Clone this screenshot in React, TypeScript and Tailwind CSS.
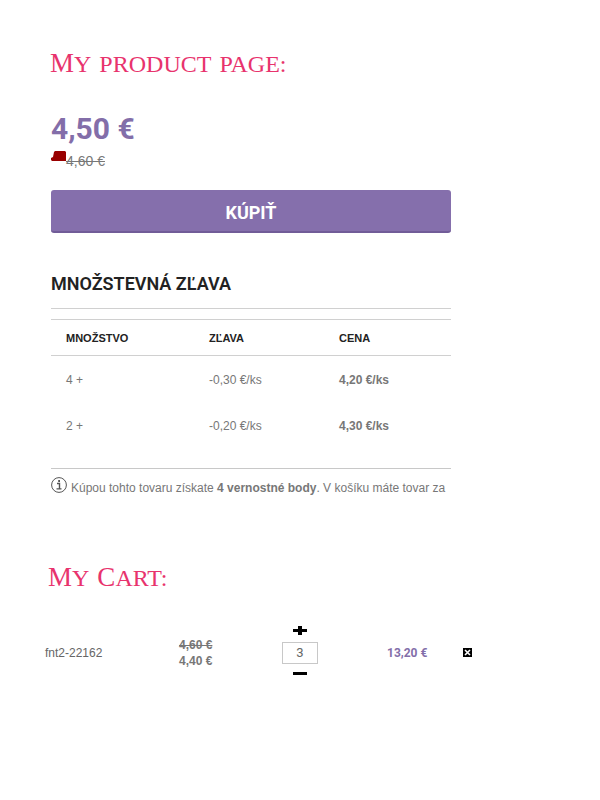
import React, { useState } from "react";

const discounts = [
	{ amount: "4 +", discount: "-0,30 €/ks", price: "4,20 €/ks" },
	{ amount: "2 +", discount: "-0,20 €/ks", price: "4,30 €/ks" },
];

const SectionTitle: React.FC<{ words: string[] }> = ({ words }) => (
	<h1 className="flex items-baseline gap-2 whitespace-nowrap font-['Liberation_Serif',serif] text-2xl leading-8 text-[#e8336d]">
		{words.map((word) => (
			<span
				key={word}
				className={
					/^[A-Z]/.test(word)
						? "inline-block uppercase first-letter:text-[27px]"
						: "inline-block uppercase"
				}
			>
				{word}
			</span>
		))}
	</h1>
);

const InfoIcon = () => (
	<svg
		className="h-4 w-4 shrink-0"
		viewBox="0 0 16 16"
		fill="none"
		stroke="#555"
		aria-hidden="true"
	>
		<circle cx="8" cy="8" r="7.4" />
		<path d="M6 6.5h2.5v5M5.5 11.9h5" strokeWidth="1.4" />
		<path d="M7.2 4h1.8" strokeWidth="1.8" />
	</svg>
);

const ProductSection = () => (
	<section>
		<p className="font-['Roboto',sans-serif] text-[30px] font-bold leading-9 text-[#836ea9]">
			4,50 €
		</p>
		<div className="mt-1 flex items-start">
			<svg
				className="h-[11px] w-[15px]"
				viewBox="0 0 15 11"
				fill="#990000"
				aria-hidden="true"
			>
				<path d="M4 0h10l1 1v9H1L0 9V7l2-1 1-5z" />
			</svg>
			<del className="text-sm text-[#777]">4,60 €</del>
		</div>
		<button
			type="button"
			className="mt-[19px] h-[43px] w-full rounded-[3px] border-b-2 border-[#715c98] bg-[#856fac] pt-1 font-['Roboto',sans-serif] text-lg font-bold text-white"
		>
			KÚPIŤ
		</button>

		<h2 className="mt-[37px] border-b border-[#d0d0d0] pb-2.5 font-['Roboto',sans-serif] text-lg font-semibold leading-7 text-[#222]">
			MNOŽSTEVNÁ ZĽAVA
		</h2>
		<table className="mt-2.5 w-full table-fixed text-left text-xs text-[#777]">
			<thead>
				<tr className="h-9 border-y border-[#d0d0d0] text-[11px] text-[#222]">
					<th className="w-[36%] pl-[15px] pt-0.5 font-bold">MNOŽSTVO</th>
					<th className="w-[32%] pl-[14px] pt-0.5 font-bold">ZĽAVA</th>
					<th className="pl-4 pt-0.5 font-bold">CENA</th>
				</tr>
			</thead>
			<tbody>
				{discounts.map((row) => (
					<tr key={row.amount} className="h-[46px]">
						<td className="pl-[15px] pt-0.5">{row.amount}</td>
						<td className="pl-[14px] pt-0.5">{row.discount}</td>
						<td className="pl-4 pt-0.5 font-bold">{row.price}</td>
					</tr>
				))}
			</tbody>
		</table>
		<div className="mt-5 flex gap-1 border-t border-[#c8c8c8] pt-2 text-[#777]">
			<InfoIcon />
			<p className="whitespace-nowrap pt-[3px] text-xs">
				Kúpou tohto tovaru získate <b>4 vernostné body</b>. V košíku máte tovar
				za
			</p>
		</div>
	</section>
);

const CartRow = () => {
	const [quantity, setQuantity] = useState(3);

	return (
		<div className="grid grid-cols-[134px_103px_105px_76px_10px] items-center text-xs text-[#666]">
			<span>fnt2-22162</span>
			<div className="flex flex-col font-bold text-[#777]">
				<del>4,60 €</del>
				<span>4,40 €</span>
			</div>
			<div className="flex w-9 flex-col items-center gap-1">
				<button
					type="button"
					aria-label="Increase quantity"
					onClick={() => setQuantity(quantity + 1)}
				>
					<svg className="h-3 w-[14px]" viewBox="0 0 14 12">
						<path d="M0 3h14v3H0zM5 0h4v9H5z" />
					</svg>
				</button>
				<input
					type="text"
					aria-label="Quantity"
					value={quantity}
					onChange={(e) => setQuantity(Number(e.target.value) || 0)}
					className="h-[22px] w-9 border border-[#c8c8c8] text-center font-['Roboto',sans-serif] text-[13px] text-[#666]"
				/>
				<button
					type="button"
					aria-label="Decrease quantity"
					onClick={() => setQuantity(Math.max(0, quantity - 1))}
				>
					<svg className="h-3 w-[14px]" viewBox="0 0 14 12">
						<path d="M0 4h14v3H0z" />
					</svg>
				</button>
			</div>
			<span className="font-['Roboto',sans-serif] text-xs font-bold text-[#836ea9]">
				13,20 €
			</span>
			<button type="button" aria-label="Remove item">
				<svg className="h-[9px] w-[9px]" viewBox="0 0 9 9">
					<path d="M0 0h9v9H0z" />
					<path d="M2 2l5 5M7 2l-5 5" stroke="#fff" strokeWidth="1.6" />
				</svg>
			</button>
		</div>
	);
};

const App = () => {
	return (
		<main className="min-h-screen bg-white font-['Liberation_Sans',Arial,sans-serif]">
			<div className="pl-[50px] pt-[47px]">
				<SectionTitle words={["My", "product", "page:"]} />
			</div>
			<div className="pl-[51px] pr-[149px] pt-[31px]">
				<ProductSection />
			</div>
			<div className="pl-12 pt-[65px]">
				<SectionTitle words={["My", "Cart:"]} />
			</div>
			<div className="pl-[45px] pt-8">
				<CartRow />
			</div>
		</main>
	);
};

export default App;
